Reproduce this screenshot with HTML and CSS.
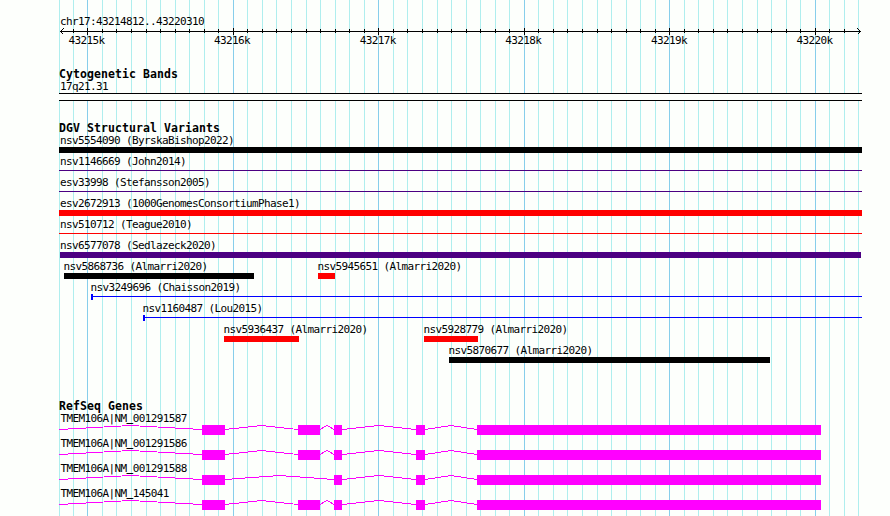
FILE: index.html
```html
<!DOCTYPE html>
<html lang="en">
<head>
<meta charset="utf-8">
<title>chr17:43214812..43220310</title>
<link rel="stylesheet" href="styles.css">
</head>
<body>
<main class="browser">
  <svg class="grid" width="890" height="516" aria-hidden="true">
    <path id="minor" class="grid-minor"/>
    <path id="major" class="grid-major"/>
  </svg>
  <section class="ruler">
    <div class="label region">chr17:43214812..43220310</div>
    <svg class="axis" width="890" height="7"><path id="axis"/></svg>
    <div class="ticks">
      <span class="label">43215k</span><span class="label">43216k</span><span class="label">43217k</span><span class="label">43218k</span><span class="label">43219k</span><span class="label">43220k</span>
    </div>
  </section>
  <section class="track cyto">
    <h2>Cytogenetic Bands</h2>
    <div class="label region">17q21.31</div>
    <div class="band"></div>
  </section>
  <section class="track variants">
    <h2>DGV Structural Variants</h2>
    <div id="variants"></div>
  </section>
  <section class="track genes">
    <h2>RefSeq Genes</h2>
    <div id="genes"></div>
  </section>
</main>
<script src="main.js"></script>
</body>
</html>
```
FILE: styles.css
```css
body {
  margin: 0;
  background: #fdfffc;
  color: #000;
  font-family: "DejaVu Sans Mono", monospace;
  font-size: 11px;
  line-height: 14px;
  overflow: hidden;
}
.browser {
  position: relative;
  width: 890px;
  height: 516px;
  overflow: hidden;
}
svg {
  display: block;
  shape-rendering: crispEdges;
  fill: none;
}
.grid {
  position: absolute;
  inset: 0;
  z-index: -1;
}
.grid-minor { stroke: #afeeee; }
.grid-major { stroke: #87ceeb; }
.label {
  height: 12px;
  letter-spacing: -0.622px;
  white-space: pre;
}
h2 {
  margin: 0 0 0 59px;
  height: 12px;
  font-size: 11.5px;
  line-height: 12px;
  letter-spacing: 0.077px;
}
.region { margin-left: 60px; }
.ruler { padding-top: 15px; }
.axis { margin-top: 1px; stroke: #000; }
.ticks {
  display: grid;
  grid-template-columns: repeat(6, 145.6px);
  margin: -1px 0 0 68.5px;
}
.cyto { padding-top: 22px; }
.band {
  box-sizing: border-box;
  width: 803px;
  height: 8px;
  margin: 1px 0 0 59px;
  border: solid #000;
  border-width: 1px 0;
  background: #fdfffc;
}
.variants { padding-top: 21px; }
.variants .row { height: 21px; }
.genes { padding-top: 35px; }
.genes .row { height: 25px; }
.row {
  display: grid;
  grid-template-rows: 13px 1fr;
}
.row .label, .row svg { grid-column: 1; }
.row .label { grid-row: 1; }
.row svg { grid-row: 2; }
/* lifts the underscore clear of the intron line */
.underscore {
  font-weight: bold;
  vertical-align: 1px;
  line-height: 0;
}
```
FILE: main.js
```js
const minor = [59,73,102,116,131,146,160,175,189,204,218,247,262,276,291,306,320,335,349,364,393,407,422,437,451,466,480,495,509,538,553,567,582,597,611,626,640,655,684,698,713,727,742,757,771,786,800,829,844,858];
const major = [87,233,378,524,669,815];
const columns = xs => xs.map(x => `M${x + .5} 0V516`).join('');
document.getElementById('minor').setAttribute('d', columns(minor));
document.getElementById('major').setAttribute('d', columns(major));
document.getElementById('axis').setAttribute('d',
  'M60 3.5H861M63.5 .5L60.5 3.5L63.5 6.5M857.5 .5L860.5 3.5L857.5 6.5' +
  minor.slice(1, -1).map(x => `M${x + .5} 1V5`).join('') +
  major.map(x => `M${x + .5} 0V7`).join(''));

// Each feature: label, label x, start, end, colour, glyph
const indigo = '#4b0082';
const variants = [
  [['nsv5554090 (ByrskaBishop2022)', 60, 59, 862, '#000', 'bar']],
  [['nsv1146669 (John2014)', 60, 59, 862, indigo, 'line']],
  [['esv33998 (Stefansson2005)', 60, 59, 862, indigo, 'line']],
  [['esv2672913 (1000GenomesConsortiumPhase1)', 60, 59, 862, '#f00', 'bar']],
  [['nsv510712 (Teague2010)', 60, 59, 862, '#f00', 'line']],
  [['nsv6577078 (Sedlazeck2020)', 60, 60, 861, indigo, 'bar']],
  [['nsv5868736 (Almarri2020)', 63.4, 64, 254, '#000', 'bar'],
   ['nsv5945651 (Almarri2020)', 317.4, 318, 335, '#f00', 'bar']],
  [['nsv3249696 (Chaisson2019)', 90.4, 91, 862, '#00f', 'capped']],
  [['nsv1160487 (Lou2015)', 142.4, 143, 862, '#00f', 'capped']],
  [['nsv5936437 (Almarri2020)', 223.4, 224, 299, '#f00', 'bar'],
   ['nsv5928779 (Almarri2020)', 423.4, 424, 478, '#f00', 'bar']],
  [['nsv5870677 (Almarri2020)', 448.4, 449, 770, '#000', 'bar']]
];
const rect = (x, y, w, h, c) => `<rect x="${x}" y="${y}" width="${w}" height="${h}" fill="${c}"/>`;
const label = (text, x) => `<div class="label" style="margin-left:${x}px">${text}</div>`;
document.getElementById('variants').innerHTML = variants.map(row => {
  const shapes = row.map(([, , a, b, c, kind]) =>
    kind === 'bar' ? rect(a, 0, b - a, 6, c)
      : rect(a, 2, b - a, 1, c) + (kind === 'capped' ? rect(a, 0, 2, 6, c) : '')).join('');
  return `<div class="row">${row.map(f => label(f[0], f[1])).join('')}<svg width="890" height="8">${shapes}</svg></div>`;
}).join('');

const exons = [[202, 225], [298, 320], [334, 342], [416, 425], [477, 821]];
const genes = [
  ['TMEM106A|NM_001291587', exons],
  ['TMEM106A|NM_001291586', exons],
  ['TMEM106A|NM_001291588', exons.filter(e => e[0] !== 298)],
  ['TMEM106A|NM_145041', exons]
];
document.getElementById('genes').innerHTML = genes.map(([name, parts]) => {
  let from = 59, introns = '';
  for (const [a, b] of parts) {
    introns += `M${from} 4.5L${(from + a) / 2} .5L${a} 4.5`;
    from = b;
  }
  const text = name.replace('_', '<span class="underscore">_</span>');
  return `<div class="row">${label(text, 60.6)}<svg width="890" height="12"><path d="${introns}" stroke="#f0f"/>${parts.map(([a, b]) => rect(a, 0, b - a, 10, '#f0f')).join('')}</svg></div>`;
}).join('');
```
